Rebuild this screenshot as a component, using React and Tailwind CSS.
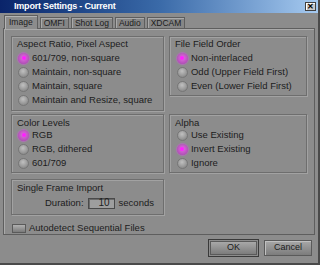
import React from 'react';

const font = { fontFamily: '"Liberation Sans", Arial, sans-serif' };

function Radio({ checked, label }) {
  return (
    <div className="flex items-center h-[14px] gap-[3px]">
      <div
        className={
          'w-[11px] h-[11px] rounded-full flex items-center justify-center ' +
          (checked
            ? 'bg-[radial-gradient(circle_at_50%_45%,#e070e0,#a040a8)] shadow-[0_0_1px_1px_#b070b8]'
            : 'bg-[radial-gradient(circle_at_45%_35%,#c0c0c0,#7c7c7c)] border border-[#767676]')
        }
      >
        {checked && <div className="w-[4px] h-[4px] rounded-full bg-[#ff20ff]" />}
      </div>
      <span className="text-[9.5px] text-[#1c1c1c] leading-none">{label}</span>
    </div>
  );
}

function Group({ title, className, children }) {
  return (
    <div className={'border border-[#6e6e6e] shadow-[inset_1px_1px_0_#a2a2a2,1px_1px_0_#a2a2a2] ' + className}>
      <div className="text-[9.5px] text-[#1c1c1c] leading-[10px]">{title}</div>
      {children}
    </div>
  );
}

function Tab({ label, active }) {
  if (active) {
    return (
      <div className="h-[14px] px-[4px] border border-b-0 border-[#5e5e5e] shadow-[inset_1px_1px_0_#b4b4b4] bg-[#8c8c8c] flex items-center text-[8.5px] text-[#1c1c1c] -mb-[1px] relative">
        {label}
      </div>
    );
  }
  return (
    <div className="h-[11px] px-[3px] border border-b-0 border-[#5e5e5e] shadow-[inset_1px_1px_0_#aaaaaa] bg-[#868686] flex items-center text-[8.5px] text-[#1c1c1c]">
      {label}
    </div>
  );
}

export default function App() {
  return (
    <div style={font} className="w-[320px] h-[265px] bg-[#8c8c8c] border-r-2 border-b-2 border-[#4a4a4a] flex flex-col overflow-hidden">
      {/* title bar */}
      <div className="h-[13px] shrink-0 bg-gradient-to-r from-[#0a246a] via-[#3a6aa8] to-[#a6caf0] flex items-center justify-between pl-[14px] pr-[2px]">
        <span className="text-white font-bold text-[9px] tracking-[-0.2px] leading-none">Import Settings - Current</span>
        <div className="w-[11px] h-[9px] bg-[#c8c8c8] border border-[#404040] shadow-[inset_1px_1px_0_#ffffff] flex items-center justify-center text-[8px] font-bold leading-none text-black">
          ✕
        </div>
      </div>

      {/* tabs */}
      <div className="flex items-end gap-[2px] pl-[4px] mt-[2px] h-[13px] shrink-0">
        <Tab label="Image" active />
        <Tab label="OMFI" />
        <Tab label="Shot Log" />
        <Tab label="Audio" />
        <Tab label="XDCAM" />
      </div>

      {/* panel */}
      <div className="ml-[3px] mr-[3px] h-[207px] shrink-0 border border-[#5e5e5e] shadow-[inset_1px_1px_0_#aaaaaa] px-[7px] pt-[7px]">
        <div className="flex gap-[5px]">
          <div className="w-[154px] flex flex-col">
            <Group title="Aspect Ratio, Pixel Aspect" className="h-[75px] pl-[5px] pt-[2px]">
              <div className="mt-[2px] pl-[1px]">
                <Radio checked label="601/709, non-square" />
                <Radio label="Maintain, non-square" />
                <Radio label="Maintain, square" />
                <Radio label="Maintain and Resize, square" />
              </div>
            </Group>
            <Group title="Color Levels" className="h-[59px] mt-[3px] pl-[5px] pt-[3px]">
              <div className="pl-[1px]">
                <Radio checked label="RGB" />
                <Radio label="RGB, dithered" />
                <Radio label="601/709" />
              </div>
            </Group>
            <Group title="Single Frame Import" className="h-[36px] mt-[6px] pl-[5px] pt-[3px]">
              <div className="flex items-center justify-start mt-[3px] pl-[28px] gap-[4px] text-[9.5px] text-[#1c1c1c]">
                <span>Duration:</span>
                <div className="w-[27px] h-[11px] bg-[#9e9e9e] border border-[#4a4a4a] shadow-[inset_1px_1px_0_#6a6a6a] flex items-center justify-end pr-[4px] text-[10px] leading-none">
                  10
                </div>
                <span>seconds</span>
              </div>
            </Group>
          </div>
          <div className="w-[139px] flex flex-col">
            <Group title="File Field Order" className="h-[60px] pl-[5px] pt-[2px]">
              <div className="mt-[2px] pl-[2px]">
                <Radio checked label="Non-interlaced" />
                <Radio label="Odd (Upper Field First)" />
                <Radio label="Even (Lower Field First)" />
              </div>
            </Group>
            <Group title="Alpha" className="h-[59px] mt-[18px] pl-[5px] pt-[3px]">
              <div className="pl-[2px]">
                <Radio label="Use Existing" />
                <Radio checked label="Invert Existing" />
                <Radio label="Ignore" />
              </div>
            </Group>
          </div>
        </div>
        <div className="flex items-center gap-[3px] mt-[6px] ml-[1px]">
          <div className="w-[14px] h-[9px] bg-gradient-to-b from-[#b0b0b0] to-[#7a7a7a] border border-[#5a5a5a]" />
          <span className="text-[9.5px] text-[#1c1c1c]">Autodetect Sequential Files</span>
        </div>
      </div>

      {/* buttons */}
      <div className="flex justify-end gap-[5px] pr-[6px] mt-[4px]">
        <div className="w-[51px] h-[18px] border border-[#3a3a3a] p-[1px]">
          <div className="w-full h-full bg-gradient-to-b from-[#a8a8a8] to-[#7c7c7c] border border-[#5a5a5a] flex items-center justify-center text-[9px] text-[#1c1c1c]">
            OK
          </div>
        </div>
        <div className="w-[48px] h-[16px] mt-[1px] bg-gradient-to-b from-[#a8a8a8] to-[#7c7c7c] border border-[#5a5a5a] shadow-[inset_1px_1px_0_#c0c0c0] flex items-center justify-center text-[9px] text-[#1c1c1c]">
          Cancel
        </div>
      </div>
    </div>
  );
}
